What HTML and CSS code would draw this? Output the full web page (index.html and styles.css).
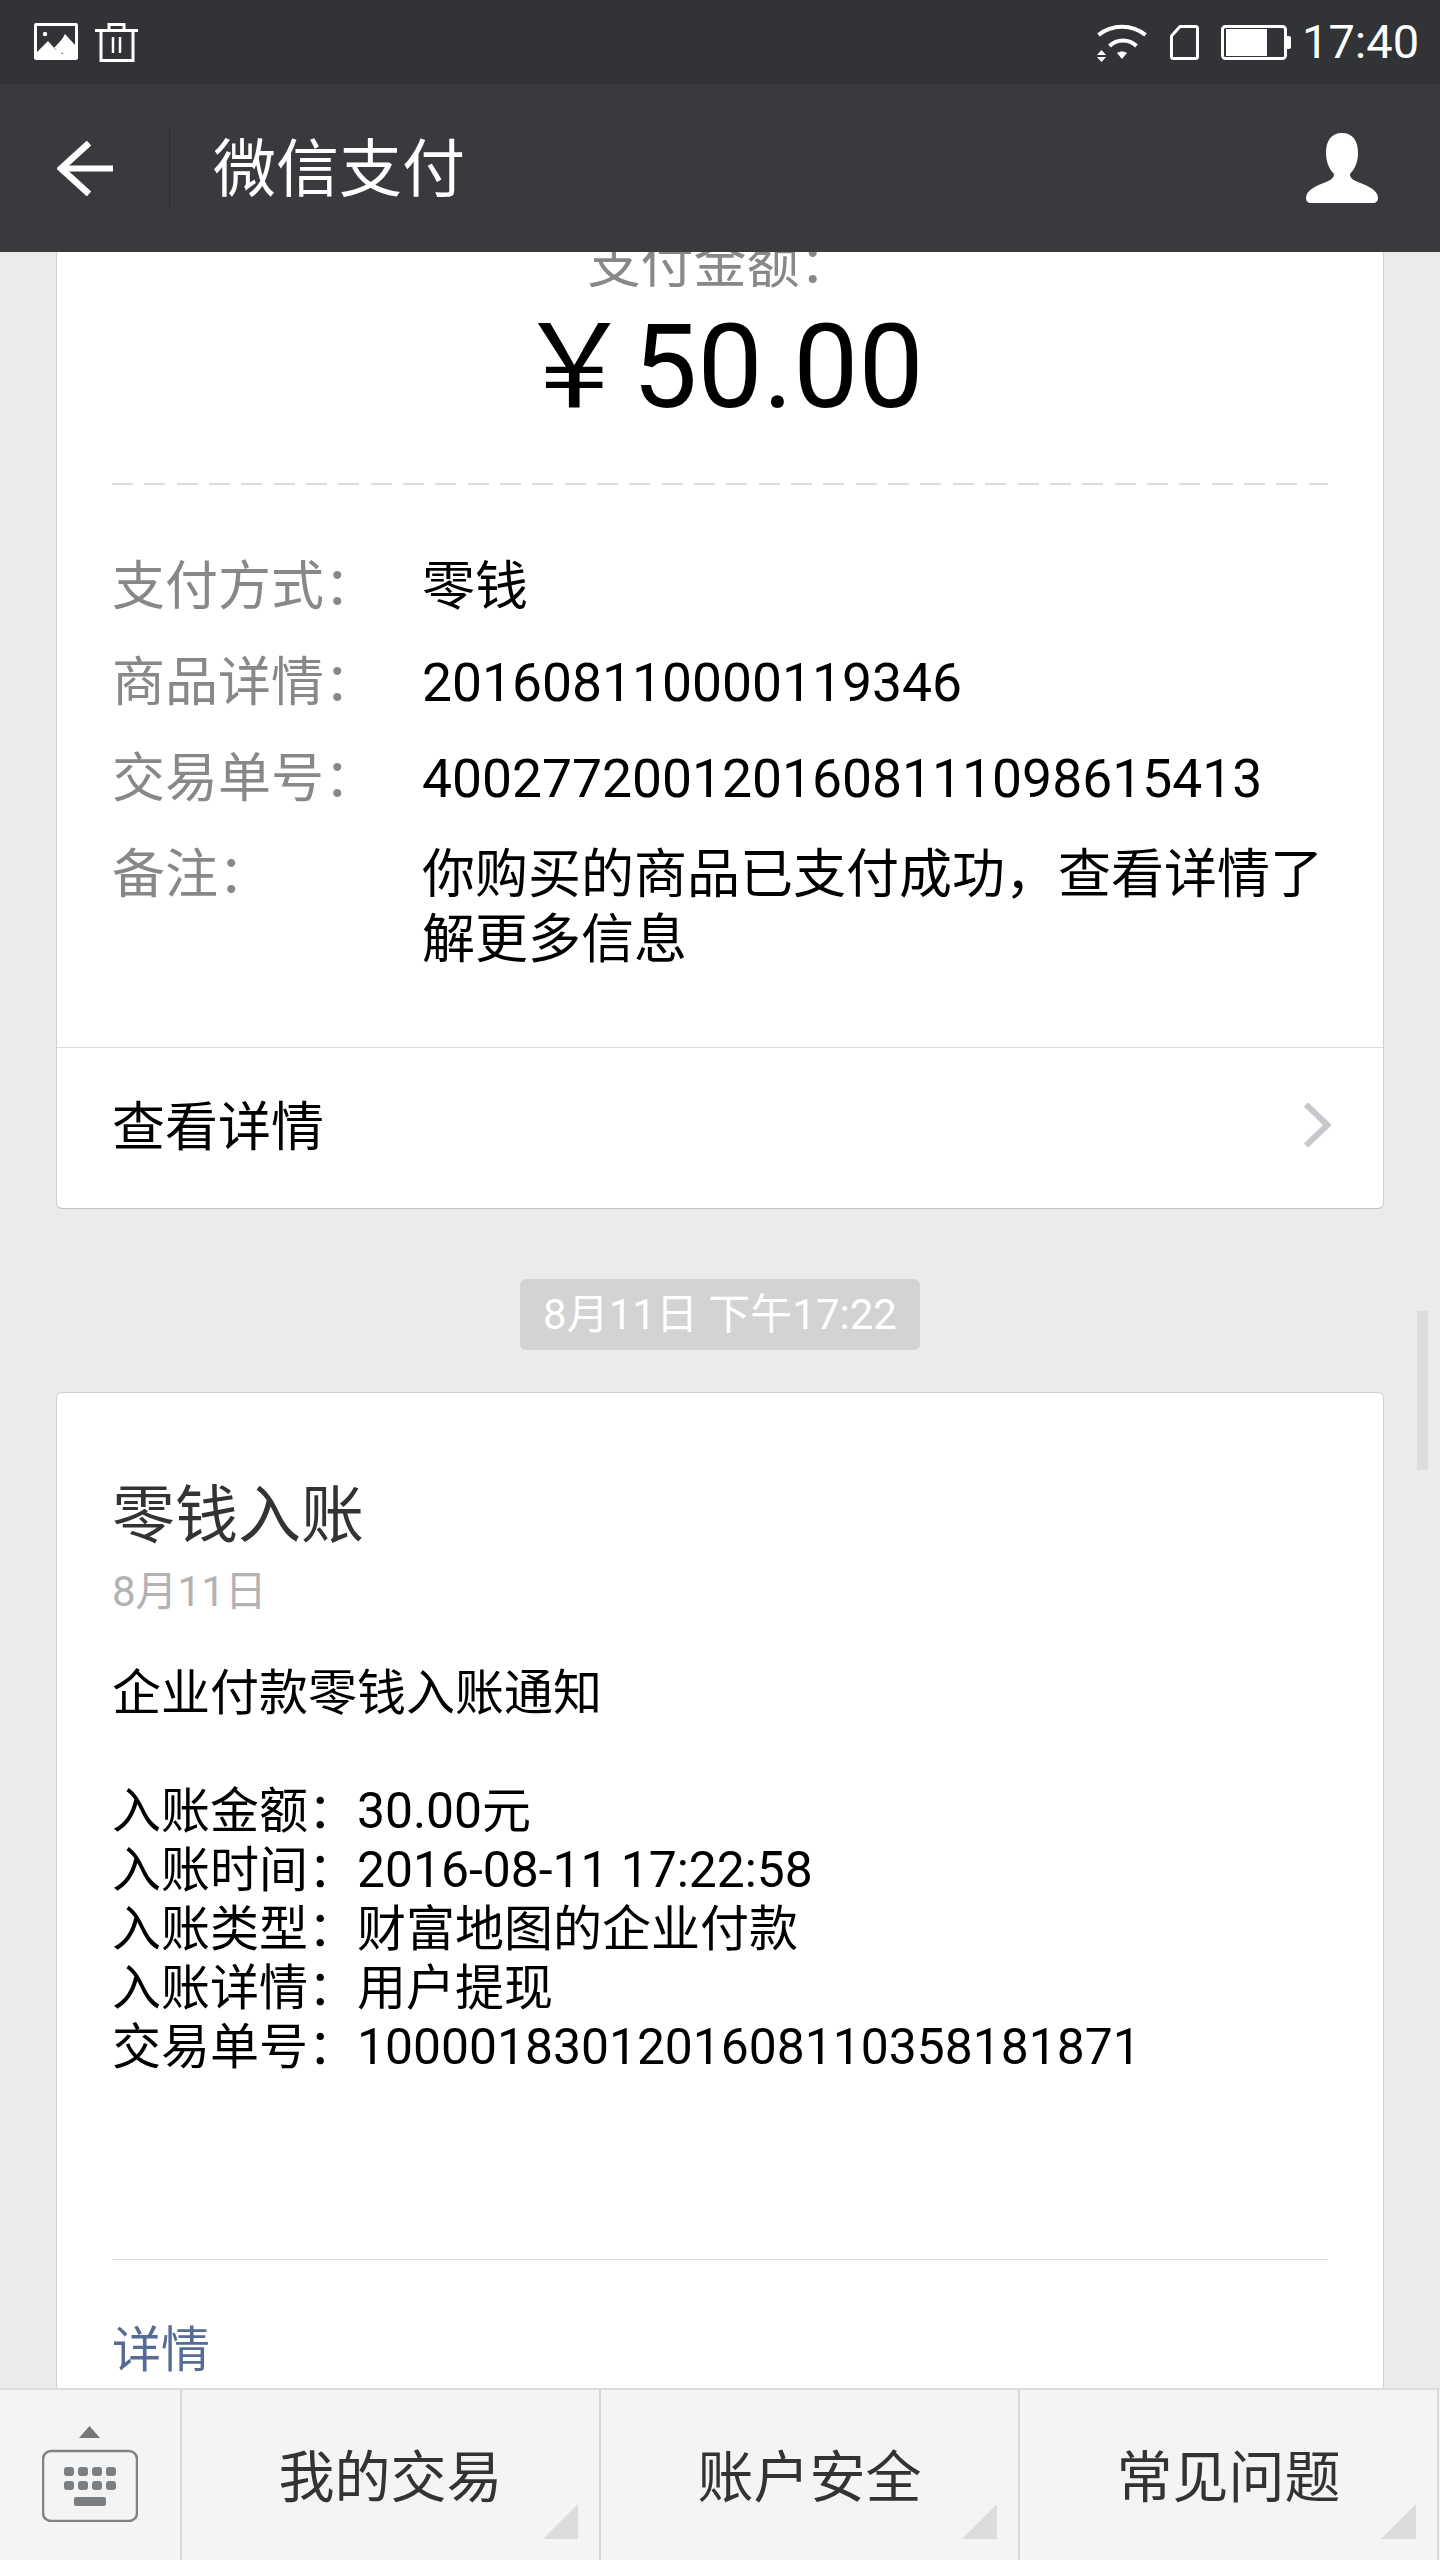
FILE: index.html
```html
<!DOCTYPE html>
<html lang="zh-CN">
<head>
<meta charset="utf-8">
<title>微信支付</title>
<link rel="stylesheet" href="styles.css">
</head>
<body>
<div class="app">
  <header class="status">
    <div class="status-group left">
      <svg class="ic-image" width="44" height="37" viewBox="0 0 44 37"><rect x="0" y="0" width="44" height="37" rx="2" fill="#fff"/><rect x="3" y="3" width="38" height="28" fill="#323337"/><circle cx="11" cy="11" r="2.2" fill="#fff"/><path d="M3 34V29L14 18L22 27L31 11L41 22V34H31L26 25L29 34Z" fill="#fff"/><path d="M20 25L31 13L27 26L30 31Z" fill="#fff"/></svg>
      <svg class="ic-trash" width="43" height="40" viewBox="0 0 43 40" fill="none" stroke="#fff" stroke-width="3"><path d="M0 8.5H43"/><path d="M14 7V2.5H29V7"/><path d="M6 8V38.5H38V8"/><path d="M18 15V31M25 15V31" stroke-width="2.5"/></svg>
    </div>
    <div class="status-group right">
      <svg class="ic-wifi" width="50" height="38" viewBox="0 0 50 38" fill="none" stroke="#fff" stroke-width="4"><path d="M1.500 11C15 0 35 0 48.500 11"/><path d="M12.500 22C20 14.500 32 14.500 39.500 22"/><path d="M20 29C23 27 27 27 30 29L25 35Z" fill="#fff" stroke="none"/><path d="M4.500 26L9 31H0ZM0 33H9L4.500 38Z" fill="#fff" stroke="none"/></svg>
      <svg class="ic-sim" width="29" height="35" viewBox="0 0 29 35" fill="none" stroke="#fff" stroke-width="3"><path d="M10 1.500H25.500Q27.500 1.500 27.500 3.500V31.500Q27.500 33.500 25.500 33.500H3.500Q1.500 33.500 1.500 31.500V11Z" stroke-linejoin="round"/></svg>
      <svg class="ic-battery" width="70" height="35" viewBox="0 0 70 35"><rect x="1.500" y="1.500" width="63" height="32" rx="3" fill="none" stroke="#fff" stroke-width="3"/><rect x="5" y="4" width="41" height="27" fill="#fff"/><path d="M66 11H68Q70 11 70 13V22Q70 24 68 24H66Z" fill="#fff"/></svg>
      <span class="clock">17:40</span>
    </div>
  </header>

  <nav class="nav">
    <svg class="ic-back" width="56" height="55" viewBox="0 0 56 55" fill="none" stroke="#fff" stroke-width="6"><path d="M4 27.500H56"/><path d="M32 2L4 27.500L32 53" stroke-width="6.500"/></svg>
    <span class="nav-divider"></span>
    <h1 class="nav-title">微信支付</h1>
    <svg class="ic-person" width="72" height="70" viewBox="0 0 72 70"><path d="M36 0C47 0 52 8 52 20C52 30 48 37 44 41C44 45 47 47 52 49C62 53 72 57 72 65C72 68 70 70 67 70H5C2 70 0 68 0 65C0 57 10 53 20 49C25 47 28 45 28 41C24 37 20 30 20 20C20 8 25 0 36 0Z" fill="#fff"/></svg>
  </nav>

  <main class="main">
    <section class="card card-pay">
      <div class="amount-label">支付金额：</div>
      <div class="amount">￥50.00</div>
      <div class="dashed"></div>
      <div class="rows">
        <div class="row"><span class="row-label">支付方式：</span><span class="row-value">零钱</span></div>
        <div class="row"><span class="row-label">商品详情：</span><span class="row-value num">201608110000119346</span></div>
        <div class="row"><span class="row-label">交易单号：</span><span class="row-value num">4002772001201608111098615413</span></div>
        <div class="row row-note"><span class="row-label">备注：</span><span class="row-value">你购买的商品已支付成功，查看详情了解更多信息</span></div>
      </div>
      <div class="link-row">
        <span class="link-text">查看详情</span>
        <svg class="ic-chevron" width="28" height="44" viewBox="0 0 28 44" fill="none" stroke="#c7c7cc" stroke-width="6"><path d="M3 1.500L24.500 22L3 42.500"/></svg>
      </div>
    </section>

    <div class="time-wrap"><span class="time-pill">8月11日 下午17:22</span></div>

    <section class="card card-notice">
      <h2 class="notice-title">零钱入账</h2>
      <div class="notice-date">8月11日</div>
      <p class="notice-body">企业付款零钱入账通知<br><br>入账金额：<span class="body-num">30.00</span>元<br>入账时间：<span class="body-num">2016-08-11 17:22:58</span><br>入账类型：财富地图的企业付款<br>入账详情：用户提现<br>交易单号：<span class="body-num">1000018301201608110358181871</span></p>
      <div class="notice-line"></div>
      <div class="notice-link">详情</div>
    </section>

    <div class="scrollbar"></div>
  </main>

  <footer class="tabs">
    <div class="tab-kbd">
      <svg width="96" height="96" viewBox="0 0 96 96" class="ic-kbd"><path d="M37 12L47.500 0L58 12Z" fill="#777"/><rect x="1" y="25" width="94" height="70" rx="8" fill="none" stroke="#7d8285" stroke-width="2.500"/><g fill="#7a7f83"><rect x="22" y="41" width="10" height="9" rx="3"/><rect x="36" y="41" width="10" height="9" rx="3"/><rect x="50" y="41" width="10" height="9" rx="3"/><rect x="64" y="41" width="10" height="9" rx="3"/><rect x="22" y="55" width="10" height="9" rx="3"/><rect x="36" y="55" width="10" height="9" rx="3"/><rect x="50" y="55" width="10" height="9" rx="3"/><rect x="64" y="55" width="10" height="9" rx="3"/><rect x="32" y="71" width="32" height="9" rx="2"/></g></svg>
    </div>
    <div class="tab">我的交易<i class="corner"></i></div>
    <div class="tab">账户安全<i class="corner"></i></div>
    <div class="tab">常见问题<i class="corner"></i></div>
  </footer>
</div>
</body>
</html>
```

FILE: styles.css
```css
* { box-sizing: border-box; }
html, body { margin: 0; padding: 0; }
body {
  width: 1440px;
  height: 2560px;
  overflow: hidden;
  background: #ebebeb;
  color: #000;
  font-family: Roboto, "Noto Sans CJK SC", sans-serif;
}
.app { display: flex; flex-direction: column; height: 2560px; }

.status {
  flex: 0 0 84px;
  background: #323337;
  display: flex;
  align-items: center;
  justify-content: space-between;
  padding: 0 22px 0 34px;
}
.status-group { display: flex; align-items: center; }
.status-group.left { gap: 17px; }
.ic-image { margin-top: -1px; }
.ic-wifi { margin-right: 23px; margin-top: 1px; }
.ic-sim { margin-right: 22px; }
.ic-battery { margin-right: 11px; }
.clock { color: #fff; font-size: 47px; line-height: 50px; width: 116px; }

.nav {
  flex: 0 0 168px;
  background: #393a3e;
  display: flex;
  align-items: center;
  padding: 0 62px 0 57px;
}
.nav-divider { width: 1px; height: 83px; background: #2d2e32; margin: 0 43px 0 56px; }
.nav-title { flex: 1; margin: 0; padding-top: 3px; color: #fff; font-size: 63px; font-weight: 400; line-height: 80px; }

.main {
  flex: 1;
  position: relative;
  overflow: hidden;
  padding: 0 56px;
  min-height: 0;
}
.card {
  background: #fff;
  border: 1px solid #cfcfcf;
  border-bottom-color: #c4c4c4;
  border-radius: 6px;
  width: 1328px;
}
.card-pay { margin-top: -28px; padding-top: 8px; }
.amount-label { color: #888; font-size: 53px; line-height: 64px; text-align: center; }
.amount { font-size: 116px; line-height: 130px; text-align: center; margin-top: 5px; }
.dashed {
  height: 2px;
  margin: 51px 55px 0;
  background: repeating-linear-gradient(90deg, #ddd 0 21px, transparent 21px 32.340px);
}
.rows { display: flex; flex-direction: column; gap: 32px; padding: 70px 55px 74px; }
.row { display: flex; line-height: 64px; }
.row-note { line-height: 65px; }
.row-label { flex: 0 0 310px; color: #888; font-size: 53px; }
.row-value { flex: 1; font-size: 53px; }
.row-value.num { font-size: 53.400px; }
.link-row {
  height: 161px;
  border-top: 1px solid #ddd;
  display: flex;
  align-items: center;
  justify-content: space-between;
  padding: 0 52px 6px 55px;
  font-size: 53px;
}
.link-text { margin-bottom: 4px; }
.time-wrap { display: flex; justify-content: center; margin: 70px 0 42px; }
.time-pill {
  height: 71px;
  line-height: 71px;
  padding: 0 23px;
  background: #d3d3d3;
  border-radius: 6px;
  color: #fff;
  font-size: 42px;
}
.card-notice { padding: 83px 55px 0; height: 1100px; }
.notice-title { margin: 0; color: #333; font-size: 63px; line-height: 80px; font-weight: 400; }
.notice-date { margin-top: 14px; color: #b2b2b2; font-size: 42px; line-height: 44px; }
.notice-body { margin: 50px 0 0; font-size: 49px; line-height: 59px; }
.body-num { font-size: 49.800px; }
.notice-line { height: 1px; background: #ddd; margin-top: 182px; }
.notice-link { margin-top: 61px; color: #576b95; font-size: 49px; line-height: 60px; }
.scrollbar { position: absolute; left: 1417px; top: 1059px; width: 11px; height: 159px; background: #dcdcdc; }

.tabs {
  flex: 0 0 172px;
  display: flex;
  background: #f4f4f4;
  border-top: 2px solid #dcdcdc;
}
.tab-kbd {
  flex: 0 0 182px;
  border-right: 2px solid #d8d8d8;
  padding: 36px 0 0 42px;
}
.ic-kbd { display: block; }
.tab {
  flex: 0 0 419px;
  position: relative;
  display: flex;
  align-items: center;
  justify-content: center;
  padding-top: 6px;
  border-right: 2px solid #d8d8d8;
  color: #333;
  font-size: 56px;
  line-height: 80px;
}
.corner {
  position: absolute;
  right: 21px;
  bottom: 21px;
  width: 35px;
  height: 35px;
  background: #dcdcdc;
  clip-path: polygon(100% 0, 100% 100%, 0 100%);
}
```
